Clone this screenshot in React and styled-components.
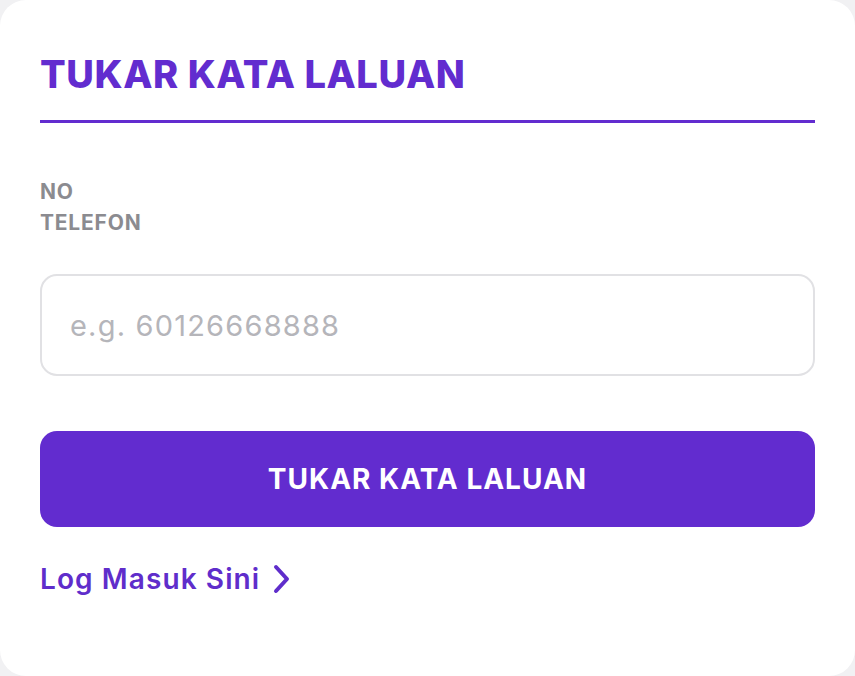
import React from "react";
import styled, { createGlobalStyle } from "styled-components";

const Global = createGlobalStyle`
  html, body { margin: 0; padding: 0; background: #f1f1f3; }
  body { font-family: Inter, "Noto Sans", sans-serif; }
  * { box-sizing: border-box; }
`;

const Card = styled.div`
  width: 855px;
  height: 676px;
  background: #ffffff;
  border-radius: 26px;
  padding: 51px 40px 0 40px;
  display: flex;
  flex-direction: column;
`;

const Title = styled.h1`
  margin: 0;
  font-size: 38px;
  line-height: 46px;
  font-weight: 800;
  color: #622ccf;
  padding-bottom: 23px;
  border-bottom: 3px solid #622ccf;
  letter-spacing: 0.6px;
`;

const Label = styled.label`
  display: block;
  margin-top: 53px;
  width: min-content;
  font-size: 21px;
  line-height: 31px;
  font-weight: 700;
  letter-spacing: 0.8px;
  color: #8b8b90;
`;

const Input = styled.input`
  margin-top: 36px;
  width: 100%;
  height: 102px;
  border: 2px solid #e1e1e4;
  border-radius: 17px;
  padding: 0 28px;
  font-family: inherit;
  font-size: 29px;
  letter-spacing: 1.2px;
  color: #333;
  outline: none;
  &::placeholder { color: #b5b5ba; }
`;

const Button = styled.button`
  margin-top: 55px;
  width: 100%;
  height: 96px;
  border: none;
  border-radius: 17px;
  background: #622ccf;
  color: #ffffff;
  font-family: inherit;
  font-size: 28px;
  font-weight: 700;
  letter-spacing: 1px;
  cursor: pointer;
`;

const LinkRow = styled.a`
  margin-top: 35px;
  display: flex;
  align-items: center;
  gap: 13px;
  color: #5f2dcb;
  font-size: 28px;
  line-height: 34px;
  font-weight: 600;
  letter-spacing: 1.1px;
  text-decoration: none;
  width: max-content;
`;

const Chevron = () => (
  <svg width="18" height="30" viewBox="0 0 18 30" fill="none">
    <path d="M3 3 L14 15 L3 27" stroke="#5f2dcb" strokeWidth="4" strokeLinecap="round" strokeLinejoin="round" />
  </svg>
);

export default function App() {
  return (
    <>
      <Global />
      <Card>
        <Title>TUKAR KATA LALUAN</Title>
        <Label htmlFor="phone">NO TELEFON</Label>
        <Input id="phone" placeholder="e.g. 60126668888" />
        <Button>TUKAR KATA LALUAN</Button>
        <LinkRow href="#">
          Log Masuk Sini
          <Chevron />
        </LinkRow>
      </Card>
    </>
  );
}
